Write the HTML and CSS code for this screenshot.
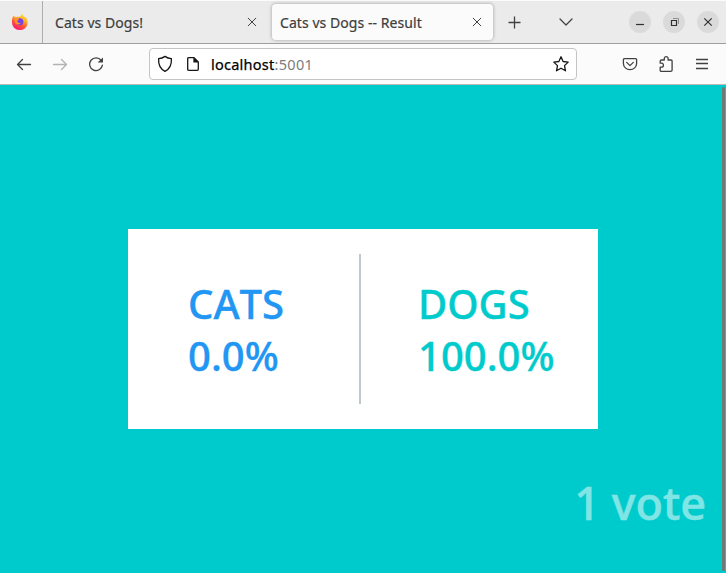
FILE: index.html
```html
<!DOCTYPE html>
<html lang="en">
<head>
<meta charset="utf-8">
<title>Cats vs Dogs -- Result</title>
<link rel="stylesheet" href="styles.css">
</head>
<body>
<div class="browser">
  <header class="tabbar">
    <div class="pinned">
      <svg width="18" height="18" viewBox="0 0 18 18">
        <defs>
          <linearGradient id="flame" x1="0.8" y1="0" x2="0.3" y2="1">
            <stop offset="0" stop-color="#ffe234"/><stop offset=".35" stop-color="#ffb02a"/><stop offset=".65" stop-color="#ff5035"/><stop offset="1" stop-color="#f8147c"/>
          </linearGradient>
        </defs>
        <path fill="url(#flame)" d="M1.6 4.2 2.8 2.8 4.3 4.2Q5.6 3.6 7.2 3.8L10 3.2Q9.8 1.9 11.2.9 12.1 3.2 14 4.3L14.2 3.7Q17 6.4 16.6 10.2A7.8 7.2 0 0 1 1 9.5Q.8 6.4 1.6 4.2Z"/>
        <circle cx="8.9" cy="8.8" r="3.5" fill="#7542e5"/>
        <path fill="#ff922d" d="M3.6 5.2Q6.2 4.2 8.2 6.3L6.5 7.5 6.3 9.1Q8.2 10.3 10 9.8 8.4 12.5 5.5 11.2 2.8 9.2 3.6 5.2Z"/>
      </svg>
    </div>
    <div class="tab">
      <span class="title first">Cats vs Dogs!</span>
      <svg class="close" width="10" height="10" viewBox="0 0 10 10"><path d="M1.2 1.2 8.8 8.8M8.8 1.2 1.2 8.8"/></svg>
    </div>
    <div class="tab active">
      <span class="title second">Cats vs Dogs -- Result</span>
      <svg class="close" width="10" height="10" viewBox="0 0 10 10"><path d="M1.2 1.2 8.8 8.8M8.8 1.2 1.2 8.8"/></svg>
    </div>
    <svg class="plus" width="14" height="14" viewBox="0 0 14 14"><path d="M7.5 1.5V13.5M1.5 7.5H13.5"/></svg>
    <svg class="chevron" width="14" height="10" viewBox="0 0 14 10"><path d="M1 2 7 8 13 2"/></svg>
    <div class="window-buttons">
      <span class="round"><svg width="22" height="22" viewBox="0 0 22 22"><path d="M7 13.5H15"/></svg></span>
      <span class="round"><svg width="22" height="22" viewBox="0 0 22 22"><path d="M8.5 9.5H13.5V14.5H8.5Z"/><path class="pale" d="M10 7.5H15.5V13"/></svg></span>
      <span class="round"><svg width="22" height="22" viewBox="0 0 22 22"><path d="M7.3 7.3 14.7 14.7M14.7 7.3 7.3 14.7"/></svg></span>
    </div>
  </header>
  <nav class="toolbar">
    <svg class="back" width="16" height="16" viewBox="0 0 16 16"><path d="M14.5 8.5H1.5M6.5 3.5 1.5 8.5 6.5 13.5"/></svg>
    <svg class="forward" width="16" height="16" viewBox="0 0 16 16"><path d="M1.5 8.5H14.5M9.5 3.5 14.5 8.5 9.5 13.5"/></svg>
    <svg class="reload" width="16" height="16" viewBox="0 0 16 16"><path d="M13.2 4.4A6.4 6.4 0 1 0 14.4 9.1"/><path class="solid" d="M15 1.4V6.6H9.6Z"/></svg>
    <div class="urlbar">
      <svg width="16" height="18" viewBox="0 0 16 18"><path class="strong" d="M8 1.4Q10.8 3.4 14.4 3.7 14.9 12.8 8 16.3 1.1 12.8 1.6 3.7 5.2 3.4 8 1.4Z"/></svg>
      <svg class="page" width="14" height="16" viewBox="0 0 14 16"><path class="strong" d="M2.6 1.7H8L12.3 6V13.2Q12.3 14.3 11.2 14.3H2.8Q1.7 14.3 1.7 13.2V2.8Q1.7 1.7 2.6 1.7Z"/><path class="solid-dark" d="M7.4 1.2 12.8 6.6H7.4Z"/></svg>
      <span class="address"><span class="host">localhost</span><span class="port">:5001</span></span>
      <svg class="star" width="18" height="18" viewBox="0 0 18 18"><path class="strong" d="M9 1.8 11.1 6.5 16.2 7.1 12.5 10.6 13.5 15.8 9 13.2 4.5 15.8 5.5 10.6 1.8 7.1 6.9 6.5Z"/></svg>
    </div>
    <div class="actions">
      <svg width="16" height="16" viewBox="0 0 16 16"><path d="M2.4 2.6H13.6Q14.6 2.6 14.6 3.6V7.4A6.6 6.3 0 0 1 1.4 7.4V3.6Q1.4 2.6 2.4 2.6Z"/><path d="M4.7 6.4 8 9.6 11.3 6.4"/></svg>
      <svg class="puzzle" width="16" height="18" viewBox="0 0 16 18"><path d="M3.2 16.4H12.7Q14.1 16.4 14.1 15V6.1Q14.1 5 13 5H10.1V3.5A1.9 1.9 0 0 0 6.3 3.5V5H3.6Q2.2 5 2.2 6.3V8.2H3.6A1.8 2 0 0 1 3.6 12.2H2.2V15.4Q2.2 16.4 3.2 16.4Z"/></svg>
      <svg class="menu" width="14" height="14" viewBox="0 0 14 14"><path d="M1 2.5H13M1 6.5H13M1 11.5H13"/></svg>
    </div>
  </nav>
  <main class="page-body">
    <section class="results">
      <div class="choice cats"><div class="label">CATS</div><div class="stat">0.0%</div></div>
      <div class="divider"></div>
      <div class="choice dogs"><div class="label">DOGS</div><div class="stat">100.0%</div></div>
    </section>
    <div class="votes">1 vote</div>
    <div class="scrollbar"></div>
  </main>
</div>
</body>
</html>
```
FILE: styles.css
```css
* { box-sizing: border-box; }
body { margin: 0; overflow: hidden; }
svg { display: block; flex: none; fill: none; stroke: #414141; stroke-width: 1.3; stroke-linecap: round; stroke-linejoin: round; }
.browser { display: flex; flex-direction: column; width: 726px; height: 573px; font-family: "Noto Sans", sans-serif; }
.tabbar { display: flex; align-items: center; height: 44px; flex: none; background: #ebebeb; border-top: 1px solid #fbfbfb; border-bottom: 1px solid #9e9e9e; color: #3d3d3d; font-size: 14px; }
.pinned { width: 43px; height: 42px; padding: 12px 0 0 11px; border-right: 1px solid #adadad; }
.pinned svg { stroke: none; }
.tab { display: flex; align-items: center; width: 222px; height: 36px; padding: 0 8px 0 12px; margin-right: 7px; white-space: nowrap; }
.tab.active { width: 221px; background: #fbfbfb; border-radius: 4px; box-shadow: 0 0 3px 1px #bcbcbc; padding: 0 11px 0 8px; margin-right: 14px; }
.title { padding-top: 1px; line-height: 20px; -webkit-text-stroke: .2px currentColor; }
.title.first { letter-spacing: .06px; }
.title.second { letter-spacing: .06px; }
.close { margin-left: auto; stroke-width: 1; }
.plus { stroke-linecap: butt; }
.chevron { margin-left: 38px; }
.window-buttons { display: flex; gap: 12px; margin-left: 56px; }
.round { width: 22px; height: 22px; flex: none; border-radius: 50%; background: #dadada; }
.round svg { stroke-width: 1.2; stroke: #303030; stroke-linecap: butt; stroke-linejoin: miter; }
.round .pale { stroke: #919191; stroke-width: 1; }
.toolbar { display: flex; align-items: center; height: 41px; flex: none; padding: 0 16px; background: #fbfbfb; border-bottom: 1px solid #bfb8b8; }
.forward { margin-left: 20px; stroke: #b2b2b2; }
.reload { margin-left: 20px; }
.solid { fill: #414141; stroke: none; }
.solid-dark { fill: #151515; stroke: none; }
.strong { stroke: #151515; stroke-width: 1.3; }
.urlbar { display: flex; align-items: center; width: 428px; height: 32px; flex: none; margin-left: 45px; padding: 0 6px 0 7px; background: #fff; border: 1px solid #c4c4c4; border-radius: 4px; }
.page { margin-left: 13px; }
.address { margin-left: 11px; font-size: 14.5px; line-height: 20px; color: #000; white-space: nowrap; }
.host { letter-spacing: .25px; -webkit-text-stroke: .25px currentColor; }
.port { color: #7c7c7c; letter-spacing: .3px; }
.star { margin-left: auto; }
.actions { display: flex; align-items: center; margin-left: 45px; }
.puzzle { margin: 0 21px 0 20px; }
.menu { stroke-linecap: butt; }
.page-body { position: relative; flex: 1; display: flex; flex-direction: column; padding-top: 144px; background: #00cbcc; }
.results { display: flex; align-items: center; width: 470px; height: 200px; margin-left: 128px; background: #fff; }
.choice { width: 231px; padding: 2px 0 0 60px; font-size: 40px; line-height: 52px; font-weight: 530; font-kerning: none; white-space: nowrap; -webkit-text-stroke: .35px currentColor; }
.choice.dogs { padding-left: 57px; }
.cats { color: #2196f3; }
.dogs { color: #00cbcc; }
.divider { width: 2px; height: 150px; flex: none; background: #bec9cf; }
.votes { align-self: flex-end; margin: 44px 20px 0 0; font-size: 45px; line-height: 60px; font-weight: 500; color: #fff; opacity: .5; white-space: nowrap; font-kerning: none; -webkit-text-stroke: .5px currentColor; }
.scrollbar { position: absolute; right: 1px; top: 2px; width: 3px; bottom: 2px; border-radius: 2px; background: #727777; }
```
